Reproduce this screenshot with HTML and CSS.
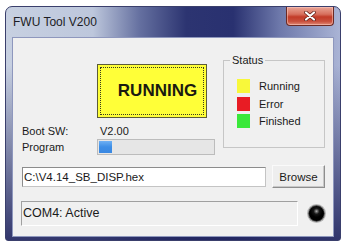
FILE: index.html
```html
<!DOCTYPE html>
<html>
<head>
<meta charset="utf-8">
<link rel="stylesheet" href="styles.css">
</head>
<body>
<div class="window">
  <div class="titlebar">
    <span class="title">FWU Tool V200</span>
    <div class="close">
      <svg width="12" height="10" viewBox="0 0 12 10">
        <path d="M2 1.5 L10 8.5 M10 1.5 L2 8.5" stroke="#5a1a14" stroke-width="3.6" stroke-linecap="round"/>
        <path d="M2 1.5 L10 8.5 M10 1.5 L2 8.5" stroke="#ffffff" stroke-width="2.2" stroke-linecap="round"/>
      </svg>
    </div>
  </div>
  <div class="client">
    <div class="top">
      <div class="left">
        <div class="running"><div class="focus">RUNNING</div></div>
        <div class="info-row boot"><span class="lbl">Boot SW:</span><span class="val">V2.00</span></div>
        <div class="info-row prog"><span class="lbl">Program</span><div class="progress"><div class="fill" style="width:13px"></div></div></div>
      </div>
      <fieldset class="status">
        <legend>Status</legend>
        <div class="items">
          <div class="item"><span class="sq yellow"></span><span>Running</span></div>
          <div class="item"><span class="sq red"></span><span>Error</span></div>
          <div class="item"><span class="sq green"></span><span>Finished</span></div>
        </div>
      </fieldset>
    </div>
    <div class="path-row">
      <div class="path">C:\V4.14_SB_DISP.hex</div>
      <div class="btn">Browse</div>
    </div>
    <div class="bar-row">
      <div class="statusbar">COM4: Active</div>
      <div class="led"></div>
    </div>
  </div>
</div>
</body>
</html>
```

FILE: styles.css
```css
body {
  margin: 0;
  background: #ffffff;
  font-family: "Liberation Sans", Arial, sans-serif;
  color: #1a1a1a;
}

.window {
  margin: 6px 0 0 5px;
  width: 336px;
  height: 235px;
  box-sizing: border-box;
  border: 1px solid #3a3f6c;
  border-radius: 7px 7px 3px 3px;
  display: flex;
  flex-direction: column;
  background:
    linear-gradient(to bottom, rgba(34, 38, 96, 0) 0%, rgba(34, 38, 96, 0) 25%, rgba(34, 38, 96, 0.9) 100%),
    linear-gradient(to right, #c7d0e1 0%, #bdc7dc 26%, #6570a0 40%, #2c3471 54%, #293170 68%, #6e79ab 82%, #aab4d5 100%);
}

.titlebar {
  height: 30px;
  display: flex;
  justify-content: space-between;
  align-items: flex-start;
  flex-shrink: 0;
}

.title {
  margin: 8px 0 0 7px;
  font-size: 12px;
  line-height: 14px;
  color: #1c1c24;
}

.close {
  margin: 0 6px 0 0;
  width: 48px;
  height: 19px;
  box-sizing: border-box;
  border: 1px solid #6b2a24;
  border-top: none;
  border-radius: 0 0 4px 4px;
  background: linear-gradient(to bottom, #e9a596 0%, #d7705e 40%, #c23b28 55%, #c9503d 80%, #e08a76 100%);
  box-shadow: inset 0 0 0 1px rgba(255, 210, 200, 0.5);
  display: flex;
  align-items: center;
  justify-content: center;
}

.client {
  margin: 0 6px 3px 6px;
  height: 200px;
  box-sizing: border-box;
  border: 1px solid #8e97bd;
  background: #f0f0f0;
  padding: 15px 8px 0 9px;
  display: flex;
  flex-direction: column;
}

.top {
  display: flex;
  align-items: flex-start;
  height: 102px;
}

.left {
  width: 193px;
  display: flex;
  flex-direction: column;
}

.running {
  margin: 11px 0 0 75px;
  width: 110px;
  height: 54px;
  box-sizing: border-box;
  border: 1px solid #5c5c38;
  background: #ffff38;
  padding: 2px;
  display: flex;
}

.focus {
  flex: 1;
  border: 1px dotted #3a3a20;
  display: flex;
  align-items: center;
  justify-content: center;
  padding-left: 11px;
  font-size: 17px;
  font-weight: bold;
  color: #1a1a10;
}

.info-row {
  display: grid;
  grid-template-columns: 75px 118px;
  align-items: center;
  font-size: 11px;
}

.boot {
  margin-top: 5px;
  height: 15px;
}

.boot .val {
  padding-left: 3px;
}

.prog {
  margin-top: 1px;
  height: 16px;
}

.progress {
  height: 16px;
  box-sizing: border-box;
  border: 1px solid #bcbcbc;
  background: #e6e6e6;
  padding: 1px;
  display: flex;
}

.fill {
  background: linear-gradient(to bottom, #6eb0f4 0%, #3d8ee6 50%, #3a88e2 100%);
}

.status {
  margin: 0 0 0 8px;
  padding: 0;
  width: 102px;
  height: 95px;
  box-sizing: border-box;
  border: 1px solid #c6c6c6;
  min-inline-size: 0;
}

.status legend {
  margin-left: 6px;
  padding: 0 2px;
  font-size: 11px;
  line-height: 14px;
}

.items {
  margin-top: 12px;
  padding-left: 13px;
  display: flex;
  flex-direction: column;
  gap: 3.5px;
}

.item {
  display: flex;
  align-items: center;
  gap: 9px;
  font-size: 11px;
  height: 14px;
}

.sq {
  width: 13px;
  height: 14px;
}

.yellow { background: #f8f83a; }
.red { background: #e81c24; }
.green { background: #3ae83a; }

.path-row {
  margin-top: 10px;
  display: flex;
  align-items: center;
  height: 23px;
}

.path {
  width: 244px;
  height: 20px;
  box-sizing: border-box;
  border: 1px solid #c4c4c4;
  border-top-color: #8c8c8c;
  border-left-color: #8c8c8c;
  background: #ffffff;
  font-size: 11.5px;
  line-height: 18px;
  padding-left: 1px;
}

.btn {
  margin-left: 6px;
  width: 53px;
  height: 23px;
  box-sizing: border-box;
  border: 1px solid #8e8e8e;
  border-top-color: #fafafa;
  border-left-color: #fafafa;
  box-shadow: inset -1px -1px 0 #c8c8c8;
  background: #eeeeee;
  font-size: 11.5px;
  display: flex;
  align-items: center;
  justify-content: center;
}

.bar-row {
  margin-top: 13px;
  display: flex;
  align-items: center;
  height: 25px;
}

.statusbar {
  margin-left: -1px;
  width: 279px;
  height: 25px;
  box-sizing: border-box;
  border: 1px solid #ffffff;
  border-top-color: #a0a0a0;
  border-left-color: #a0a0a0;
  font-size: 12.5px;
  line-height: 23px;
  padding-left: 1px;
}

.led {
  margin-left: 10px;
  width: 17px;
  height: 17px;
  box-sizing: border-box;
  border-radius: 50%;
  border: 1.5px solid #5a5a5a;
  box-shadow: 0 0 0 1px #b8b8b8;
  background: radial-gradient(circle at 50% 35%, #b0b0b0 0, #5a5a5a 1.5px, #151515 3px, #000000 6px);
}
```
